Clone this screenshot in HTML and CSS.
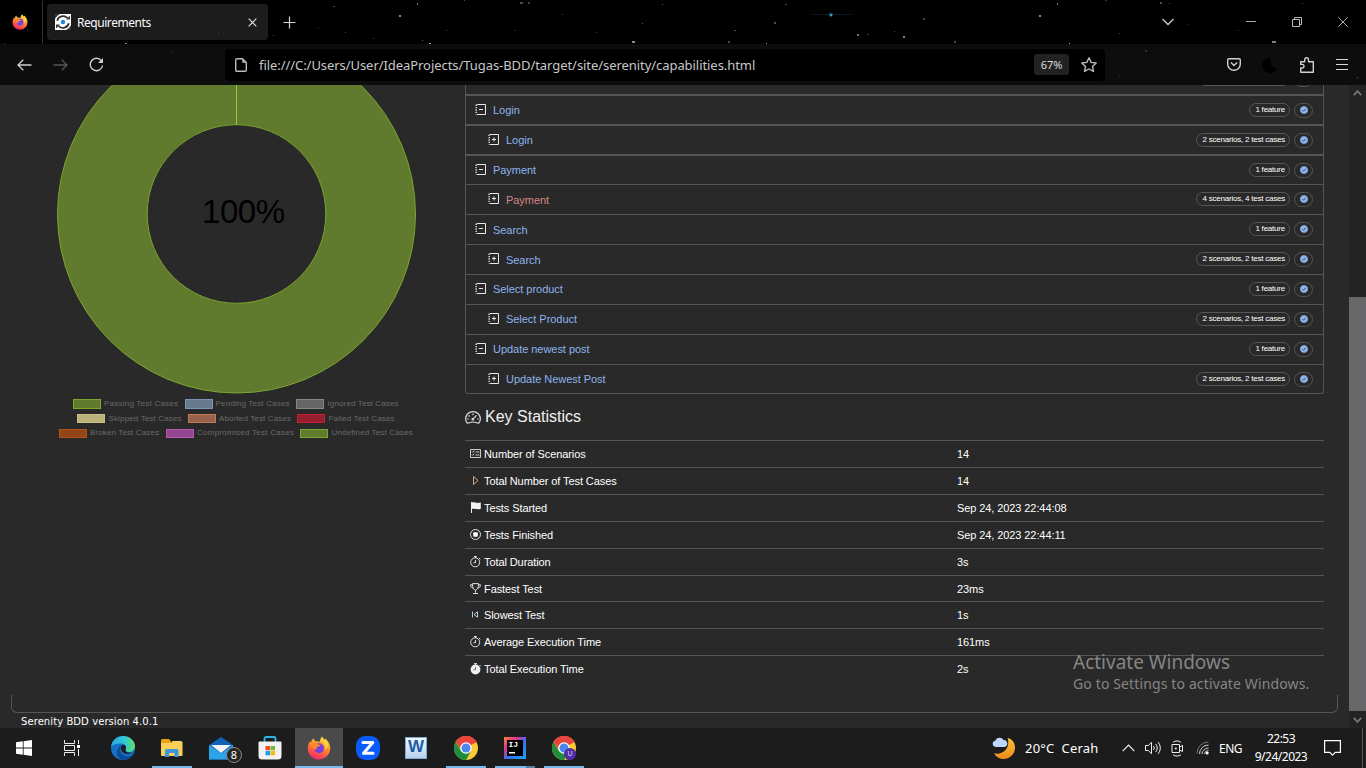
FILE: index.html
```html
<!DOCTYPE html>
<html lang="en">
<head>
<meta charset="utf-8">
<title>Requirements</title>
<link rel="stylesheet" href="styles.css">
</head>
<body>
<svg class="defs" width="0" height="0">
  <defs>
    <linearGradient id="ffg" x1="0.7" y1="0" x2="0.3" y2="1"><stop offset="0" stop-color="#ffe14a"/><stop offset=".45" stop-color="#ff8a2a"/><stop offset="1" stop-color="#f5206a"/></linearGradient>
    <linearGradient id="edg" x1="0" y1="0" x2="1" y2="0"><stop offset="0" stop-color="#2aa6e4"/><stop offset=".55" stop-color="#2fc6d8"/><stop offset="1" stop-color="#5fe06a"/></linearGradient>
    <linearGradient id="moon" x1="0" y1="0" x2="0" y2="1"><stop offset="0" stop-color="#f9c23c"/><stop offset="1" stop-color="#f08a1c"/></linearGradient>
  </defs>
  <symbol id="firefox" viewBox="0 0 24 24">
    <path fill="url(#ffg)" d="M15.2.5c.3 1.6 1.5 2.5 2.6 3.7.2-.8 0-1.5-.2-2.2 3 2.2 5.6 5.600 5.600 10.300C23.200 18.700 18.200 23.500 12 23.500S.8 18.700.8 12.400c0-3 1-5.500 2.300-7.300.1.8.4 1.300.8 1.700C4.300 4.700 5.300 3.200 6.600 2.200c.1 1.500 1 2.500 2.600 3 1.500.2 2.600.4 3.600.6C13 3.800 13.800 1.700 15.200.5z"/>
    <circle cx="12" cy="12.300" r="5" fill="#7b3fe0"/>
    <path fill="#ff8a2c" d="M5 8c2-1.400 4-1.200 6 .2 1 .6 1.800.7 3 .8-.6 1.300-2 1.600-3.300 1.800-1.500.5-1.700 1.900-1.100 2.900-2.600.3-4.600-2.700-4.600-5.700z"/>
    <path fill="#ffd23c" d="M15.200.5c-.7 2.500-.2 4.500 1.400 6.500 1.700 2.200 2 4.500 1 6.800 2.600-1.200 3.900-3.700 3.600-6.800-.7-2.300-5.600-3-6-6.500z"/>
  </symbol>
  <symbol id="chrome" viewBox="0 0 24 24">
    <circle cx="12" cy="12" r="12" fill="#fcc934"/>
    <path fill="#e8453c" d="M12 12 1.600 6A12 12 0 0 1 22.400 6z"/>
    <path fill="#e8453c" d="M12 6.500h10.700A12 12 0 0 0 1.600 6L7 14z"/>
    <path fill="#1e8e3e" d="M1.600 6A12 12 0 0 0 12 24l5-9-5 2.500-5-2.500z"/>
    <circle cx="12" cy="12" r="5.800" fill="#fff"/><circle cx="12" cy="12" r="4.500" fill="#4a86ee"/>
  </symbol>
  <symbol id="minus" viewBox="0 0 12 12">
    <path d="M2 .5h8.500v10H2" fill="none" stroke="#e8e8e8"/><path d="M1.200.5v10" stroke="#d5d5d5" stroke-width="1.500" stroke-dasharray="1.400 1"/><path d="M4 5.500h4" stroke="#e8e8e8"/>
  </symbol>
  <symbol id="plus" viewBox="0 0 12 12">
    <path d="M2 .5h8.500v10H2" fill="none" stroke="#e8e8e8"/><path d="M1.200.5v10" stroke="#d5d5d5" stroke-width="1.500" stroke-dasharray="1.400 1"/><path d="M4 5.500h4M6 3.500v4" stroke="#e8e8e8"/>
  </symbol>
  <symbol id="check" viewBox="0 0 16 16">
    <path fill="#8db4ee" d="M8 0l2 1.200 2.300-.1 1.100 2.100 2 1.200-.1 2.300L16 8l-.7 1.800.1 2.200-2 1.200-1.100 2-2.300-.1L8 16l-2-.9-2.300.1-1.100-2-2-1.200.1-2.200L0 8l.7-1.500L.6 4.300l2-1.200L3.700 1l2.300.2z"/>
    <path d="M4.800 8.200l2.300 2.300 4.200-4.800" stroke="#26374f" stroke-width="1.600" fill="none"/>
  </symbol>
  <symbol id="stopwatch" viewBox="0 0 12 12">
    <circle cx="5.200" cy="6.300" r="4.500" fill="none" stroke="#ddd"/><path d="M4 .6h3M5.500.6v1.500M5.500 4v2.700H3.400M9 2l1.300 1.300" stroke="#ddd" fill="none"/>
  </symbol>
</svg>

<header class="browser">
  <svg class="stars" width="1366" height="85">
    <g fill="#fff">
      <rect x="4" y="43" width="1" height="1" opacity=".3"/><rect x="27" y="29" width="1" height="1" opacity=".2"/><rect x="125" y="43" width="2" height="1" opacity=".5"/><rect x="218" y="33" width="1" height="1" opacity=".2"/><rect x="273" y="35" width="1" height="1" opacity=".3"/><rect x="318" y="27" width="1" height="1" opacity=".25"/><rect x="333" y="6" width="2" height="1" opacity=".3"/><rect x="345" y="32" width="1" height="1" opacity=".3"/><rect x="373" y="38" width="1" height="1" opacity=".25"/><rect x="399" y="15" width="2" height="2" opacity=".55"/><rect x="417" y="3" width="1" height="2" opacity=".5"/><rect x="422" y="40" width="1" height="1" opacity=".4"/><rect x="429" y="43" width="2" height="1" opacity=".6"/><rect x="446" y="30" width="1" height="1" opacity=".3"/><rect x="464" y="0" width="1" height="1" opacity=".3"/><rect x="520" y="2" width="3" height="2" opacity=".3"/><rect x="528" y="2" width="2" height="2" opacity=".25"/><rect x="515" y="30" width="1" height="1" opacity=".3"/><rect x="562" y="14" width="1" height="1" opacity=".25"/><rect x="596" y="32" width="1" height="1" opacity=".25"/><rect x="632" y="41" width="3" height="2" opacity=".55"/><rect x="642" y="23" width="1" height="1" opacity=".35"/><rect x="662" y="4" width="1" height="1" opacity=".35"/><rect x="728" y="41" width="2" height="2" opacity=".3"/><rect x="734" y="30" width="2" height="1" opacity=".3"/><rect x="766" y="43" width="1" height="1" opacity=".6"/><rect x="774" y="22" width="2" height="2" opacity=".3"/><rect x="785" y="4" width="2" height="1" opacity=".3"/><rect x="857" y="34" width="2" height="2" opacity=".45"/><rect x="867" y="34" width="2" height="1" opacity=".25"/><rect x="903" y="36" width="2" height="2" opacity=".5"/><rect x="894" y="31" width="1" height="1" opacity=".3"/><rect x="923" y="18" width="2" height="2" opacity=".25"/><rect x="954" y="41" width="2" height="2" opacity=".3"/><rect x="1039" y="15" width="2" height="2" opacity=".55"/><rect x="1057" y="3" width="1" height="2" opacity=".5"/><rect x="1069" y="43" width="1" height="1" fill="#fbb" opacity=".8"/><rect x="1105" y="0" width="2" height="1" opacity=".2"/><rect x="1119" y="33" width="1" height="1" opacity=".3"/><rect x="1160" y="2" width="2" height="2" opacity=".3"/><rect x="1169" y="3" width="1" height="1" opacity=".3"/><rect x="1188" y="24" width="1" height="1" opacity=".2"/><rect x="1238" y="30" width="1" height="1" opacity=".25"/><rect x="1272" y="41" width="4" height="2" opacity=".5"/><rect x="1302" y="3" width="1" height="1" opacity=".3"/><rect x="1145" y="50" width="2" height="2" opacity=".15"/><rect x="1119" y="76" width="1" height="1" opacity=".15"/><rect x="172" y="51" width="1" height="1" opacity=".2"/><rect x="1357" y="77" width="1" height="1" opacity=".3"/>
    </g>
    <path d="M812 14.500h40" stroke="#0b4460" opacity=".4"/><circle cx="831" cy="14.700" r="2.300" fill="#0d4b66" opacity=".8"/><rect x="830" y="14" width="2" height="2" fill="#3f9cba"/>
  </svg>
  <div class="titlebar">
    <div class="fxview"><svg width="16" height="16"><use href="#firefox"/></svg></div>
    <div class="tab">
      <svg width="16" height="16" viewBox="0 0 16 16"><rect width="16" height="16" fill="#fff"/><circle cx="8" cy="8" r="2.200" fill="#1c86d8"/><path d="M2.200 6.800A6 5.800 0 0 1 12.500 4M13.800 9.200A6 5.800 0 0 1 3.500 12" stroke="#333" stroke-width="1.800" fill="none"/><path d="M0 5V0h5C3 1 1 3 0 5zM16 11v5h-5c2-1 4-3 5-5zM11 5.500h4V1.500zM5 10.500H1v4z" fill="#3a3a3a"/></svg>
      <span class="tab-title">Requirements</span>
      <svg class="tab-close" width="9" height="9"><path d="M.7.7l7.600 7.600M8.300.7L.7 8.300" stroke="#ddd" stroke-width="1.200"/></svg>
    </div>
    <svg class="newtab" width="13" height="13"><path d="M6.500.5v12M.5 6.500h12" stroke="#d5d5d5" stroke-width="1.200"/></svg>
    <div class="winctl">
      <svg width="12" height="8"><path d="M.5 1l5.500 5.500L11.500 1" stroke="#ccc" stroke-width="1.300" fill="none"/></svg>
      <svg class="min" width="10" height="10"><path d="M0 4.500h10" stroke="#aaa"/></svg>
      <svg class="max" width="10" height="10"><path d="M.5 2.500h7v7h-7zM2.500 2.500v-2h7v7h-2" stroke="#bbb" fill="none"/></svg>
      <svg class="cls" width="10" height="10"><path d="M.3.3l9.400 9.400M9.700.3L.3 9.700" stroke="#bbb" stroke-width=".9"/></svg>
    </div>
  </div>
  <div class="toolbar">
    <svg class="back" width="15" height="12"><path d="M14.500 6H1M6.300.8L1 6l5.300 5.200" stroke="#cfcfcf" stroke-width="1.300" fill="none"/></svg>
    <svg class="fwd" width="15" height="12"><path d="M.5 6H14M8.700.8L14 6l-5.300 5.200" stroke="#555" stroke-width="1.300" fill="none"/></svg>
    <svg class="reload" width="15" height="15"><path d="M12.300 3.600A6.200 6.200 0 1 0 13.600 8.500" stroke="#cfcfcf" stroke-width="1.400" fill="none"/><path d="M14 1v5H9z" fill="#cfcfcf"/></svg>
    <div class="urlbar">
      <svg width="12" height="14"><path d="M2 .7h5.500L11.300 4.500v7.800a1 1 0 0 1-1 1H1.700a1 1 0 0 1-1-1V2A1.300 1.300 0 0 1 2 .7z" stroke="#bbb" stroke-width="1.400" fill="none"/><path d="M7.300.7v4h4z" fill="#bbb"/></svg>
      <span class="url">file:///C:/Users/User/IdeaProjects/Tugas-BDD/target/site/serenity/capabilities.html</span>
      <span class="zoomlvl">67%</span>
      <svg class="star" width="16" height="16"><path d="M8 .8l2.200 4.600 5 .6-3.700 3.400 1 5L8 12l-4.500 2.400 1-5L.8 6l5-.6z" stroke="#bbb" stroke-width="1.400" fill="none" stroke-linejoin="round"/></svg>
    </div>
    <div class="tools">
      <svg width="14" height="13"><path d="M2 .7h10a1.300 1.300 0 0 1 1.300 1.300v4.200a6.300 6 0 0 1-12.600 0V2A1.300 1.300 0 0 1 2 .7z" stroke="#d0d0d0" stroke-width="1.400" fill="none"/><path d="M4 4.500l3 3 3-3" stroke="#d0d0d0" stroke-width="1.400" fill="none"/></svg>
      <svg class="dark" width="16" height="16"><path d="M9 .5A7.800 7.800 0 1 0 15 12 8.500 8.500 0 0 1 9 .5z" fill="#000"/><path d="M11 4.500l1-1M13.500 6l.6-1M12 9l.5-.5" stroke="#1c1c1c"/></svg>
      <svg class="ext" width="14" height="16"><path d="M.7 6V4.700h4V2.600a1.900 1.900 0 0 1 3.800 0v2.100h4.800v10.500H.7V11h1.500a1.500 1.500 0 0 0 0-3.600H.7z" stroke="#d0d0d0" stroke-width="1.400" fill="none" stroke-linejoin="round"/></svg>
      <svg class="menu" width="12" height="11"><path d="M0 .5h12M0 5.500h12M0 10.500h12" stroke="#d8d8d8"/></svg>
    </div>
  </div>
</header>

<main class="page">
  <div class="report">
    <div class="columns">
      <svg class="chart" width="465" height="370" viewBox="0 85 465 370">
        <circle cx="236.500" cy="214" r="134.200" fill="none" stroke="#617b2e" stroke-width="89.500"/>
        <circle cx="236.500" cy="214" r="179" fill="none" stroke="#7ea52f"/>
        <circle cx="236.500" cy="214" r="89.300" fill="none" stroke="#7ea52f"/>
        <path d="M236.500 85v40" stroke="#94cc2c"/>
        <text x="202" y="223" class="pct" textLength="83">100%</text>
        <g class="legend">
          <rect x="73.500" y="399.500" width="27" height="9" fill="#617b2e" stroke="#7ea52f"/><text x="104" y="406" textLength="74">Passing Test Cases</text>
          <rect x="185.500" y="399.500" width="27" height="9" fill="#667a8d" stroke="#7995b2"/><text x="215.500" y="406" textLength="74">Pending Test Cases</text>
          <rect x="296.500" y="399.500" width="27" height="9" fill="#666" stroke="#868686"/><text x="327.500" y="406" textLength="71">Ignored Test Cases</text>
          <rect x="77.500" y="414.500" width="27" height="8" fill="#bab27a" stroke="#c8bf82"/><text x="108.500" y="421" textLength="73">Skipped Test Cases</text>
          <rect x="188.500" y="414.500" width="27" height="8" fill="#97624a" stroke="#c47a55"/><text x="219" y="421" textLength="72">Aborted Test Cases</text>
          <rect x="297.500" y="414.500" width="27" height="8" fill="#951f2c" stroke="#c51d31"/><text x="328.500" y="421" textLength="66">Failed Test Cases</text>
          <rect x="59.500" y="429.500" width="27" height="8" fill="#934518" stroke="#b85218"/><text x="90" y="435.400" textLength="69">Broken Test Cases</text>
          <rect x="166.500" y="429.500" width="27" height="8" fill="#934790" stroke="#ba58b6"/><text x="197" y="435.400" textLength="97">Compromised Test Cases</text>
          <rect x="300.500" y="429.500" width="27" height="8" fill="#617b2e" stroke="#7ea52f"/><text x="331.500" y="435.400" textLength="81">Undefined Test Cases</text>
        </g>
      </svg>
      <div class="details">
        <div class="tree">
          <div class="row cut"><span class="pill blank"></span><span class="pill ok"></span></div>
          <div class="row thick"><svg width="12" height="12"><use href="#minus"/></svg><a>Login</a><span class="pill">1 feature</span><span class="pill ok"><svg width="8" height="8"><use href="#check"/></svg></span></div>
          <div class="row thick sub"><svg width="12" height="12"><use href="#plus"/></svg><a>Login</a><span class="pill">2 scenarios, 2 test cases</span><span class="pill ok"><svg width="8" height="8"><use href="#check"/></svg></span></div>
          <div class="row short"><svg width="12" height="12"><use href="#minus"/></svg><a>Payment</a><span class="pill">1 feature</span><span class="pill ok"><svg width="8" height="8"><use href="#check"/></svg></span></div>
          <div class="row sub"><svg width="12" height="12"><use href="#plus"/></svg><a class="fail">Payment</a><span class="pill">4 scenarios, 4 test cases</span><span class="pill ok"><svg width="8" height="8"><use href="#check"/></svg></span></div>
          <div class="row"><svg width="12" height="12"><use href="#minus"/></svg><a>Search</a><span class="pill">1 feature</span><span class="pill ok"><svg width="8" height="8"><use href="#check"/></svg></span></div>
          <div class="row sub"><svg width="12" height="12"><use href="#plus"/></svg><a>Search</a><span class="pill">2 scenarios, 2 test cases</span><span class="pill ok"><svg width="8" height="8"><use href="#check"/></svg></span></div>
          <div class="row high"><svg width="12" height="12"><use href="#minus"/></svg><a>Select product</a><span class="pill">1 feature</span><span class="pill ok"><svg width="8" height="8"><use href="#check"/></svg></span></div>
          <div class="row high sub"><svg width="12" height="12"><use href="#plus"/></svg><a>Select Product</a><span class="pill">2 scenarios, 2 test cases</span><span class="pill ok"><svg width="8" height="8"><use href="#check"/></svg></span></div>
          <div class="row high"><svg width="12" height="12"><use href="#minus"/></svg><a>Update newest post</a><span class="pill">1 feature</span><span class="pill ok"><svg width="8" height="8"><use href="#check"/></svg></span></div>
          <div class="row sub last"><svg width="12" height="12"><use href="#plus"/></svg><a>Update Newest Post</a><span class="pill">2 scenarios, 2 test cases</span><span class="pill ok"><svg width="8" height="8"><use href="#check"/></svg></span></div>
        </div>
        <h2 class="heading"><svg width="16" height="13" viewBox="0 0 16 13"><path d="M2.200 12C.8 10.600.6 9.200.6 7.800a7.400 7.200 0 0 1 14.800 0c0 1.400-.2 2.800-1.600 4.200-1.300.8-2.300-1-5.800-1s-4.500 1.800-5.800 1z" fill="none" stroke="#ddd" stroke-width="1.200"/><path d="M8 2.500v1.800M3.600 4.500l1 1M2.300 8h1.500M12.200 8h1.500M7.700 8.400l3.800-4" stroke="#ddd" stroke-width="1.200"/><circle cx="7.800" cy="8.300" r="1.300" fill="#ddd"/></svg><span>Key Statistics</span></h2>
        <div class="stats">
          <div class="stat"><svg width="12" height="12"><path d="M.5 1.500h10v8H.5zM5.500 4h4M5.500 7h4M2 3.500l.8.800 1.400-1.600M2 6.500l.8.800 1.400-1.600" stroke="#ccc" fill="none"/></svg><span class="name">Number of Scenarios</span><span>14</span></div>
          <div class="stat"><svg width="12" height="12"><path d="M3.500 1.500v8l4.500-4z" stroke="#d9a886" fill="none"/></svg><span class="name">Total Number of Test Cases</span><span>14</span></div>
          <div class="stat"><svg width="12" height="12"><path d="M1.500 0v11" stroke="#eee"/><path d="M1.500.6C4-.6 6 2 10.800.5v6.200C7 8.200 4.500 5.600 1.500 7.200z" fill="#f2f2f2"/></svg><span class="name">Tests Started</span><span>Sep 24, 2023 22:44:08</span></div>
          <div class="stat"><svg width="12" height="12"><circle cx="5.500" cy="5.500" r="5" stroke="#ddd" fill="none"/><rect x="3.200" y="3.200" width="4.600" height="4.600" rx="1" fill="#fff"/></svg><span class="name">Tests Finished</span><span>Sep 24, 2023 22:44:11</span></div>
          <div class="stat"><svg width="12" height="12"><use href="#stopwatch"/></svg><span class="name">Total Duration</span><span>3s</span></div>
          <div class="stat less"><svg width="12" height="12"><path d="M2.500.6h6c0 4-.8 6-3 6.600-2.200-.6-3-2.600-3-6.600zM2.500 1.700H.6c0 2 .7 3 2.400 3.300M8.500 1.700h1.900c0 2-.7 3-2.400 3.300M5.500 7.200v2.500M3 10.500h5" stroke="#ddd" fill="none"/></svg><span class="name">Fastest Test</span><span>23ms</span></div>
          <div class="stat"><svg width="12" height="12"><path d="M2.500 2.500v6M7.500 2.800v5.400L4 5.500z" stroke="#b9cddd" fill="none"/></svg><span class="name">Slowest Test</span><span>1s</span></div>
          <div class="stat"><svg width="12" height="12"><use href="#stopwatch"/></svg><span class="name">Average Execution Time</span><span>161ms</span></div>
          <div class="stat"><svg width="12" height="12"><circle cx="5.500" cy="6.500" r="4.900" fill="#f2f2f2"/><path d="M4 .6h3M5.500.6v1.500M9.500 2l1.300 1.300" stroke="#ddd"/><path d="M5.500 3.800v2.900H3.400" stroke="#555" fill="none" stroke-width=".8"/></svg><span class="name">Total Execution Time</span><span>2s</span></div>
        </div>
      </div>
    </div>
    <div class="panel-end"></div>
    <footer class="version">Serenity BDD version 4.0.1</footer>
  </div>
  <div class="scroll">
    <svg width="9" height="6"><path d="M.8 5.200l3.700-4 3.700 4" stroke="#777" stroke-width="1.800" fill="none"/></svg>
    <div class="thumb"></div>
    <svg width="9" height="6"><path d="M.8.800l3.700 4 3.700-4" stroke="#777" stroke-width="1.800" fill="none"/></svg>
  </div>
  <div class="watermark"><div class="w1">Activate Windows</div><div class="w2">Go to Settings to activate Windows.</div></div>
</main>

<nav class="taskbar">
  <div class="app start"><svg width="16" height="16"><path d="M0 2.300L6.800 1.300v6.300H0zM7.600 1.200L16 0v7.600H7.600zM0 8.400h6.800v6.300L0 13.700zM7.600 8.400H16V16l-8.400-1.200z" fill="#fff"/></svg></div>
  <div class="app view"><svg width="17" height="16"><path d="M.5 0v3.500h10V0M.5 16v-3.500h10V16M.5 5.500h10v5H.5zM14.500 0v4M14.500 9v7" stroke="#eee" fill="none"/><rect x="13" y="5" width="3" height="3" fill="#fff"/></svg></div>
  <div class="app"><svg width="24" height="24" viewBox="0 0 24 24"><circle cx="12" cy="12" r="12" fill="#1470c4"/><path d="M0 11C1 4 6 0 12 0c7 0 12 5 12 10 0 4-3 6-6 6-3.500 0-4-1.500-3.500-2.500 2-3-.5-6-4-6C5 7.500 1 9 0 11z" fill="url(#edg)"/><path d="M10.500 9c-3 3-2 9 3 11 3 1 6.500.2 8.700-1.700C19.500 22.500 16 24 12 24c-6-1-8-9-4-13 .7-.8 1.500-1.500 2.500-2z" fill="#0c4a94"/><path d="M14.500 13.500c.6-1 .7-2 .2-3-1.200-1.800-3.800-2-4.600.2-.9 2.300.4 5.600 4 6.800 3.500 1 7-.2 8-1.600-3.500 1.800-8 .6-7.600-2.400z" fill="#1d1d1d"/></svg></div>
  <div class="app on"><svg width="22" height="20" viewBox="0 0 22 20"><path d="M0 2.500A1.500 1.500 0 0 1 1.500 1H8l2 2.500v3H0z" fill="#e5a50f"/><path d="M0 5h10l1.500-2H20a1.500 1.500 0 0 1 1.500 1.500V17a1 1 0 0 1-1 1H1a1 1 0 0 1-1-1z" fill="#fbd05a"/><path d="M4 19v-6.500A1.500 1.500 0 0 1 5.500 11h10.500a1.500 1.500 0 0 1 1.500 1.500V19h-4v-4H8v4z" fill="#3d96d9"/></svg></div>
  <div class="app mail"><svg width="24" height="23" viewBox="0 0 24 23"><path d="M0 8l12-8 12 8v14.500H0z" fill="#0f62b5"/><path d="M2 8h20l-10 8z" fill="#f4f4f4"/><path d="M0 8l12 8.500L24 8v14.500H0z" fill="#2ba5e8"/></svg><span class="badge">8</span></div>
  <div class="app"><svg width="24" height="24" viewBox="0 0 24 24"><path d="M6.500 6V2.500A1.500 1.500 0 0 1 8 1h8a1.500 1.500 0 0 1 1.500 1.500V6" fill="none" stroke="#2bb7e6" stroke-width="1.800"/><path d="M.5 6.500A1 1 0 0 1 1.500 5.500h21a1 1 0 0 1 1 1V20a3.500 3.500 0 0 1-3.500 3.500H4A3.500 3.500 0 0 1 .5 20z" fill="#f2f2f2"/><path d="M7.500 10H12v4.300H7.500z" fill="#f04e24"/><path d="M12.500 10H17v4.300h-4.500z" fill="#7ab82c"/><path d="M7.500 15H12v4.300H7.500z" fill="#12a2ee"/><path d="M12.500 15H17v4.300h-4.500z" fill="#fdb714"/></svg></div>
  <div class="app active"><svg width="24" height="24"><use href="#firefox"/></svg></div>
  <div class="app"><svg width="24" height="24" viewBox="0 0 24 24"><rect width="24" height="24" rx="9.500" fill="#0b5cff"/><path d="M7 6.500h9.800L7.500 17.300H17" stroke="#fff" stroke-width="3" fill="none" stroke-linejoin="round" stroke-linecap="round"/></svg></div>
  <div class="app word"><span class="doc">W</span></div>
  <div class="app on"><svg width="24" height="24"><use href="#chrome"/></svg></div>
  <div class="app on multi"><span class="ij"><span>IJ</span></span></div>
  <div class="app on prof"><svg width="24" height="24"><use href="#chrome"/></svg><span class="user">U</span></div>
  <div class="tray">
    <svg width="24" height="23" viewBox="0 0 24 23"><path d="M15.500 1c5 1 8 5.500 7.500 10.500-.5 6-5.500 10.500-11.500 10.500-4 0-7.500-2-9.500-6 3.500 1.500 8 .5 11-2.500 3.500-3.500 4-8.500 2.500-12.500z" fill="url(#moon)"/><path d="M3.500 10a3.200 3.200 0 0 1-.3-6.300A4.700 4.700 0 0 1 11.600 3a3.500 3.500 0 0 1 2 6.500L13 10z" fill="#bcd8fa"/></svg>
    <span class="temp">20°C&nbsp; Cerah</span>
    <svg class="up" width="13" height="8"><path d="M.7 7.200l5.800-6 5.800 6" stroke="#eee" stroke-width="1.200" fill="none"/></svg>
    <svg class="vol" width="17" height="14"><path d="M.5 4.500h2.800L6.500 1.300v11.400L3.300 9.500H.5z" stroke="#eee" fill="none"/><path d="M8.500 5a3 3 0 0 1 0 4M10.700 3a6 6 0 0 1 0 8M13.200 1.200a9 9 0 0 1 0 11.600" stroke="#eee" fill="none"/></svg>
    <svg class="cam" width="13" height="17"><path d="M1 4.500h7.500v8H1zM8.500 7l3-1.500v6l-3-1.500M2 2.300C4 .5 8 .5 10 2.300M2 14.700c2 1.800 6 1.800 8 0" stroke="#eee" fill="none"/><circle cx="4.800" cy="8.500" r="1" fill="#eee"/></svg>
    <svg class="wifi" width="14" height="14"><path d="M1 12.500A11.500 11.500 0 0 1 12.500 1" stroke="#777" fill="none"/><path d="M3.500 13A9 9 0 0 1 12.500 4M6 13a6.500 6.500 0 0 1 6.500-6M8.500 13a4 4 0 0 1 4-3.500" stroke="#ccc" fill="none"/><circle cx="11.200" cy="12" r="1.500" fill="#fff"/></svg>
    <span class="lang">ENG</span>
    <span class="clock"><span>22:53</span><span class="date">9/24/2023</span></span>
    <svg class="note" width="17" height="16"><path d="M.6.6h15.800v11.800h-5.200l-2.700 2.700-2.700-2.700H.6z" stroke="#fff" stroke-width="1.200" fill="none"/></svg>
    <span class="peek"></span>
  </div>
</nav>
</body>
</html>
```
FILE: styles.css
```css
* { box-sizing: border-box; }
body { margin: 0; width: 1366px; height: 768px; overflow: hidden; display: flex; flex-direction: column; background: #292929; color: #fff; font-family: "Liberation Sans", Arial, sans-serif; }
svg { display: block; flex: none; }
.defs { position: absolute; }

.browser { position: relative; height: 85px; flex: none; background: #000; font-family: "Noto Sans", "Open Sans", sans-serif; }
.stars { position: absolute; left: 0; top: 0; z-index: 1; pointer-events: none; }
.titlebar { height: 44px; display: flex; align-items: center; }
.fxview { width: 43px; height: 44px; border-right: 1px solid #2f2f2f; padding-left: 12px; display: flex; align-items: center; }
.tab { width: 221px; height: 36px; margin-left: 4px; background: #1c1c1c; border-radius: 4px; display: flex; align-items: center; padding: 0 11px 0 8px; }
.tab-title { margin-left: 6px; font-size: 12px; letter-spacing: -.45px; color: #fbfbfe; flex: 1; white-space: nowrap; }
.newtab { margin-left: 15px; }
.winctl { margin-left: auto; padding-right: 18px; display: flex; align-items: center; }
.min { margin-left: 72px; }
.max { margin-left: 36px; }
.cls { margin-left: 36px; }
.toolbar { height: 41px; background: #0d0d0d; display: flex; align-items: center; padding-left: 17px; }
.fwd { margin-left: 21px; }
.reload { margin-left: 21px; }
.urlbar { position: relative; z-index: 2; width: 880px; height: 32px; margin-left: 121px; background: #000; border-radius: 4px; display: flex; align-items: center; padding-left: 10px; }
.url { margin-left: 12px; width: 775px; font-size: 13px; letter-spacing: -.06px; color: #c8c8c8; white-space: nowrap; }
.zoomlvl { width: 35px; height: 21px; background: #222; border-radius: 3px; font-size: 11px; line-height: 21px; text-align: center; color: #ddd; }
.star { margin-left: 12px; }
.tools { margin-left: auto; padding-right: 18px; display: flex; align-items: center; }
.tools > svg:first-child { margin-right: 1px; margin-left: 1px; }
.dark { margin-left: 20px; }
.ext { margin-left: 22px; }
.menu { margin-left: 22px; }

.page { position: relative; height: 643px; flex: none; display: flex; overflow: hidden; }
.report { width: 1349px; }
.columns { display: flex; height: 610px; }
.chart { width: 465px; }
.pct { font-size: 33px; fill: #000; }
.legend text { font-size: 8px; fill: #6a6a6a; }
.details { width: 859px; }
.tree { border: 1px solid #555; border-top: 0; border-radius: 0 0 3px 3px; font-size: 11px; }
.row { height: 30px; border-bottom: 1px solid #555; display: flex; align-items: center; padding: 0 10px 0 9px; }
.row > svg { margin-top: -1px; }
.row a { margin: 0 auto 0 6px; letter-spacing: -.04px; color: #8db4ee; }
.row a.fail { color: #d98585; }
.row.sub { padding-left: 22px; }
.row.thick { border-bottom-width: 2px; }
.row.short { height: 29px; }
.row.high { padding-bottom: 1px; }
.row.high > svg { margin-top: 0; }
.row.last { height: 28px; border-bottom: 0; }
.row.cut { height: 11px; border-bottom-width: 2px; overflow: hidden; align-items: flex-end; justify-content: flex-end; padding-bottom: 7px; }
.pill { height: 14px; border: 1px solid #555; border-radius: 7px; padding: 0 4px 0 5px; margin-bottom: 1px; font-size: 8px; line-height: 12px; letter-spacing: -.22px; white-space: nowrap; color: #fff; }
.pill.blank { width: 92px; }
.pill.ok { width: 19px; height: 15px; margin: 0 0 0 4px; padding: 2px 0 0 5px; border-radius: 8px; }
.pill.ok svg { margin-left: -.5px; }
.heading { display: flex; align-items: center; gap: 4px; margin: 13px 0 13px; height: 20px; font-size: 16px; font-weight: 400; line-height: 20px; color: #f0f0f0; }
.stat { height: 27px; border-top: 1px solid #555; display: flex; align-items: center; padding-left: 5px; font-size: 11px; letter-spacing: -.09px; }
.stat.less { height: 26px; }
.name { margin-left: 2px; width: 473px; }
.panel-end { margin-left: 11px; width: 1327px; height: 18px; border: 1px solid #555; border-top: 0; border-radius: 0 0 6px 6px; }
.version { font-family: "DejaVu Sans", sans-serif; font-size: 10px; line-height: 12px; letter-spacing: .08px; margin: 3px 0 0 21px; }
.scroll { width: 17px; background: #232323; display: flex; flex-direction: column; align-items: center; padding: 5px 0; }
.thumb { width: 17px; height: 414px; margin: auto 0 6px; background: #676769; }
.watermark { position: absolute; left: 1073px; top: 566px; font-family: "Noto Sans", "Open Sans", sans-serif; color: #858585; white-space: nowrap; }
.w1 { font-size: 19px; line-height: 22px; }
.w2 { font-size: 14px; line-height: 22px; letter-spacing: .13px; }

.taskbar { height: 40px; flex: none; background: #1c1c1c; display: flex; font-family: "Noto Sans", "Open Sans", sans-serif; }
.app { position: relative; width: 49px; height: 40px; display: flex; align-items: center; justify-content: center; }
.start { width: 48px; }
.view { width: 50px; padding-right: 1px; }
.on::after { content: ""; position: absolute; left: 5px; bottom: 0; width: 40px; height: 2px; background: #76b9ed; }
.multi::after { background: linear-gradient(to right, #76b9ed 31px, #53819f 31px); }
.active { background: #4a4a4a; border-bottom: 2px solid #76b9ed; padding-top: 1px; margin-left: 1px; width: 48px; }
.badge { position: absolute; left: 30px; top: 19px; width: 16px; height: 16px; border: 1px solid #888; border-radius: 50%; background: #252525; font-size: 11px; line-height: 14px; text-align: center; }
.doc { width: 22px; height: 22px; margin-right: 2px; background: linear-gradient(#f3f8fd, #b7d3ee); border: 1px solid #7fa8d4; color: #1c5ca8; font: bold 17px/18px "Liberation Sans", sans-serif; text-align: center; letter-spacing: -1px; }
.ij { width: 22px; height: 22px; background: linear-gradient(135deg, #f9872e, #e8318c 30%, #3a6df0 55%, #18a5f5); padding: 3px; }
.ij span { display: block; width: 16px; height: 16px; padding-left: 2px; background: linear-gradient(#fff, #fff) 2px 12px / 6px 1.500px no-repeat #000; font: bold 8px/10px "Liberation Mono", monospace; }
.user { position: absolute; right: 12px; top: 20px; width: 12px; height: 12px; border-radius: 50%; background: #512da8; font-size: 7px; line-height: 12px; text-align: center; color: #ddd; }
.tray { margin-left: auto; display: flex; align-items: center; white-space: nowrap; }
.temp { margin-left: 9px; width: 97px; font-size: 13px; letter-spacing: .2px; }
.vol { margin-left: 10px; }
.cam { margin-left: 9px; }
.wifi { margin-left: 12px; }
.lang { margin-left: 9px; width: 25px; font-size: 12px; letter-spacing: -.5px; }
.clock { margin-left: 10px; width: 54px; display: flex; flex-direction: column; align-items: center; font-size: 12px; line-height: 18px; letter-spacing: -.5px; }
.note { margin-left: 16px; margin-top: -1px; }
.peek { width: 1px; height: 40px; margin: 0 3px 0 21px; background: #555; }
```
